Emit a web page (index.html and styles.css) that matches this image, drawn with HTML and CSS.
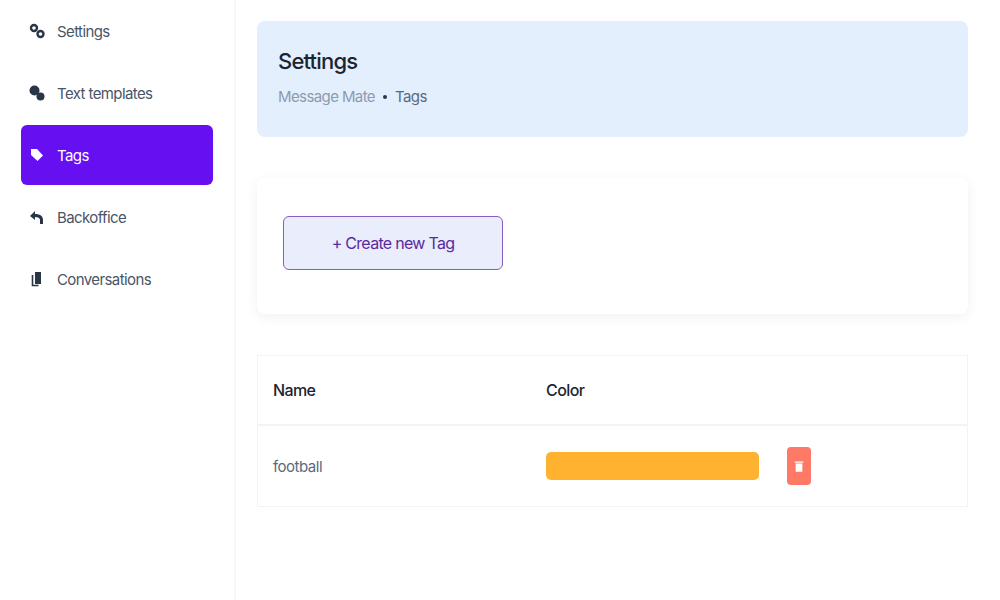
FILE: index.html
```html
<!DOCTYPE html>
<html>
<head lang="en">
    <title>Settings - Tags</title>
    <link rel="stylesheet" href="styles.css">
</head>
<body>
    <div class="layout">
        <div class="sidebar">
            <a class="nav-item nav-settings">
                <svg class="nav-icon" viewBox="0 0 16 16"><circle cx="5" cy="5" r="3" fill="none" stroke="#2a3547" stroke-width="2.4"/><circle cx="11.5" cy="11" r="3" fill="none" stroke="#2a3547" stroke-width="2.4"/></svg>
                <span>Settings</span>
            </a>
            <a class="nav-item nav-templates">
                <svg class="nav-icon" viewBox="0 0 16 16"><circle cx="5.5" cy="5.5" r="5" fill="#2a3547"/><circle cx="11.5" cy="11.5" r="4" fill="#2a3547"/></svg>
                <span>Text templates</span>
            </a>
            <a class="nav-item nav-tags active">
                <svg class="nav-icon" viewBox="0 0 16 16"><path d="M2 2h6l6 6.5-5.5 5.5L2 8z" fill="#fff"/></svg>
                <span>Tags</span>
            </a>
            <a class="nav-item nav-backoffice">
                <svg class="nav-icon" viewBox="0 0 16 16"><path d="M1 7l5-5v3c5 0 8 2 8 6v4h-3v-4c0-2-2-3-5-3v3z" fill="#2a3547"/></svg>
                <span>Backoffice</span>
            </a>
            <a class="nav-item nav-conversations">
                <svg class="nav-icon" viewBox="0 0 16 16"><path d="M6 1h6v12H6z" fill="#2a3547"/><path d="M3.5 4v10.500h6" fill="none" stroke="#2a3547" stroke-width="1.600"/></svg>
                <span>Conversations</span>
            </a>
        </div>
        <div class="main">
            <div class="page-header">
                <h1>Settings</h1>
                <div class="breadcrumb">
                    <span class="crumb-muted">Message Mate</span>
                    <span class="crumb-dot"></span>
                    <span>Tags</span>
                </div>
            </div>
            <div class="card">
                <button class="create-btn">+ Create new Tag</button>
            </div>
            <table class="tag-table">
                <thead>
                    <tr><th class="col-name">Name</th><th>Color</th></tr>
                </thead>
                <tbody>
                    <tr>
                        <td>football</td>
                        <td>
                            <div class="color-cell">
                                <div class="color-bar"></div>
                                <button class="delete-btn">
                                    <svg viewBox="0 0 12 16" width="10" height="14"><path d="M1 2.500h10v1.500H1zM2 5h8v10H2z" fill="#fff"/></svg>
                                </button>
                            </div>
                        </td>
                    </tr>
                </tbody>
            </table>
        </div>
    </div>
</body>
</html>
```

FILE: styles.css
```css
body {
    margin: 0;
    font-family: Inter, "Liberation Sans", sans-serif;
    color: #2a3547;
    background: #fff;
}

.layout {
    display: flex;
    min-height: 600px;
}

.sidebar {
    width: 236px;
    box-sizing: border-box;
    padding: 1px 21px 0;
    border-right: 2px solid #f6f7f9;
    display: flex;
    flex-direction: column;
    gap: 2px;
}

.nav-item {
    height: 60px;
    display: flex;
    align-items: center;
    gap: 12px;
    padding-left: 8px;
    border-radius: 6px;
    font-size: 15px;
    letter-spacing: -0.6px;
    color: #4a5566;
}

.nav-icon {
    width: 16px;
    height: 16px;
    flex: none;
}

.nav-item.active {
    background: #6610f2;
    color: #fff;
}

.main {
    width: 711px;
    margin-left: 21px;
    padding-top: 21px;
}

.page-header {
    height: 116px;
    box-sizing: border-box;
    padding: 24px 21px 0;
    background: #e3effc;
    border-radius: 8px;
}

h1 {
    margin: 0;
    font-size: 22px;
    line-height: 32px;
    font-weight: 500;
    letter-spacing: -0.8px;
    color: #1b2431;
}

.breadcrumb {
    display: flex;
    align-items: center;
    gap: 8px;
    margin-top: 10px;
    font-size: 15px;
    letter-spacing: -0.6px;
    color: #5a6a7e;
}

.crumb-muted {
    color: #8c9bb0;
}

.crumb-dot {
    width: 4px;
    height: 4px;
    border-radius: 50%;
    background: #2a3547;
}

.card {
    margin-top: 41px;
    height: 136px;
    box-sizing: border-box;
    padding: 38px 26px;
    border-radius: 8px;
    background: #fff;
    box-shadow: 0 3px 12px rgba(30, 50, 90, 0.07);
}

.create-btn {
    width: 220px;
    height: 54px;
    border: 1px solid #8a5cc0;
    border-radius: 6px;
    background: #e9edfc;
    font-family: inherit;
    font-size: 16px;
    letter-spacing: -0.7px;
    color: #5a2a9e;
}

.tag-table {
    width: 100%;
    margin-top: 41px;
    border-collapse: collapse;
    border: 1px solid #f1f3f6;
    border-radius: 8px;
}

.tag-table th {
    height: 68px;
    padding: 0 15px;
    text-align: left;
    font-size: 16px;
    font-weight: 500;
    letter-spacing: -0.6px;
    color: #1b2431;
    border-bottom: 2px solid #f1f3f6;
}

.tag-table .col-name {
    width: 243px;
}

.tag-table td {
    height: 80px;
    padding: 0 15px;
    font-size: 15px;
    letter-spacing: -0.5px;
    color: #5a6a7e;
}

.color-cell {
    display: flex;
    align-items: center;
    gap: 28px;
}

.color-bar {
    width: 213px;
    height: 28px;
    border-radius: 5px;
    background: #ffb130;
}

.delete-btn {
    width: 24px;
    height: 38px;
    padding: 0;
    border: none;
    border-radius: 4px;
    background: #ff7a66;
    display: flex;
    align-items: center;
    justify-content: center;
}
```
